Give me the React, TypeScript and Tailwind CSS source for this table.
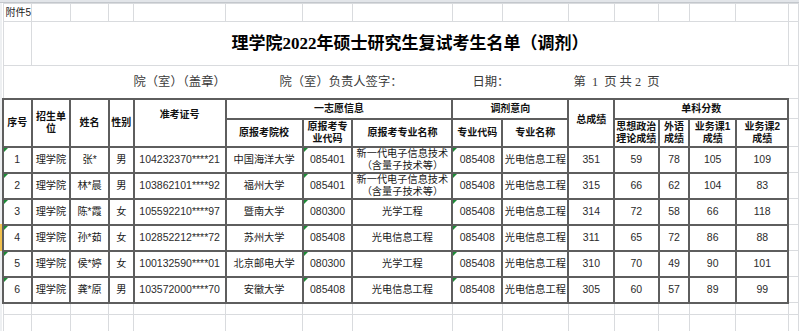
import type { ReactNode } from 'react';

interface Student {
  no: string;
  unit: string;
  name: string;
  sex: string;
  exam: string;
  school: string;
  code: string;
  major: ReactNode;
  tCode: string;
  tMajor: string;
  total: string;
  pol: string;
  lang: string;
  b1: string;
  b2: string;
}

const NEW_GEN = (
  <>
    新一代电子信息技术
    <br />
    （含量子技术等）
  </>
);

const STUDENTS: Student[] = [
  { no: '1', unit: '理学院', name: '张*', sex: '男', exam: '104232370****21', school: '中国海洋大学', code: '085401', major: NEW_GEN, tCode: '085408', tMajor: '光电信息工程', total: '351', pol: '59', lang: '78', b1: '105', b2: '109' },
  { no: '2', unit: '理学院', name: '林*晨', sex: '男', exam: '103862101****92', school: '福州大学', code: '085401', major: NEW_GEN, tCode: '085408', tMajor: '光电信息工程', total: '315', pol: '66', lang: '62', b1: '104', b2: '83' },
  { no: '3', unit: '理学院', name: '陈*霞', sex: '女', exam: '105592210****97', school: '暨南大学', code: '080300', major: '光学工程', tCode: '085408', tMajor: '光电信息工程', total: '314', pol: '72', lang: '58', b1: '66', b2: '118' },
  { no: '4', unit: '理学院', name: '孙*茹', sex: '女', exam: '102852212****72', school: '苏州大学', code: '085408', major: '光电信息工程', tCode: '085408', tMajor: '光电信息工程', total: '311', pol: '65', lang: '72', b1: '86', b2: '88' },
  { no: '5', unit: '理学院', name: '侯*婷', sex: '女', exam: '100132590****01', school: '北京邮电大学', code: '080300', major: '光学工程', tCode: '085408', tMajor: '光电信息工程', total: '310', pol: '70', lang: '49', b1: '90', b2: '101' },
  { no: '6', unit: '理学院', name: '龚*原', sex: '男', exam: '103572000****70', school: '安徽大学', code: '085408', major: '光电信息工程', tCode: '085408', tMajor: '光电信息工程', total: '305', pol: '60', lang: '57', b1: '89', b2: '99' },
];

// column widths in px, last one is the sheet filler to the window edge
const COLS = [26, 39, 39, 25, 92, 78, 50, 101, 50, 67, 46, 45, 31, 47, 53, 10];

const grid = 'border border-[#d9dbde] p-0';
const cell = 'border-2 border-[#5e5e5e] p-0 text-center align-middle';
const head = `${cell} font-bold text-[10px] leading-[12px] text-[#111]`;
const num = 'text-[10.5px] text-[#2b2b2b]';
const cjk = 'text-[10.2px] text-[#1a1a1a]';

function Mark() {
  return <span className="absolute left-0 top-0 border-t-[4px] border-r-[4px] border-t-[#1d8a36] border-r-transparent" />;
}

function EmptyRow({ h }: { h: string }) {
  return (
    <tr className={h}>
      {COLS.map((_, i) => (
        <td key={i} className={grid} />
      ))}
    </tr>
  );
}

export default function App() {
  return (
    <div className="w-[799px] h-[331px] overflow-hidden bg-white font-['Liberation_Sans','Noto_Sans_CJK_SC',sans-serif]">
      <div className="h-[3px] bg-[#e2e5e9] border-b border-[#c3c7cc]" />
      <div className="flex">
        <div className="flex w-[2px] shrink-0 flex-col bg-[#eef0f2]">
          <div className="h-[221px]" />
          <div className="h-[27px] bg-[#f2c14e]" />
        </div>
        <table className="table-fixed border-collapse">
          <colgroup>
            {COLS.map((w, i) => (
              <col key={i} style={{ width: w }} />
            ))}
          </colgroup>
          <tbody>
            <tr className="h-[18px]">
              <td className={`${grid} pl-[2px] text-[10px] text-[#222] whitespace-nowrap`}>附件5</td>
              {COLS.slice(1).map((_, i) => (
                <td key={i} className={grid} />
              ))}
            </tr>
            <tr className="h-[44px]">
              <td className={grid} />
              <td colSpan={14} className={`${grid} text-center font-['Liberation_Serif','Noto_Sans_CJK_SC',serif] text-[17px] font-bold text-black`}>
                理学院2022年硕士研究生复试考生名单（调剂）
              </td>
              <td className={grid} />
            </tr>
            <tr className="h-[33px]">
              <td colSpan={16} className={grid}>
                <div className="flex items-center pl-[130px] font-['Liberation_Serif','Noto_Sans_CJK_SC',serif] text-[12.3px] text-[#3a3a3a]">
                  <span className="w-[146px]">院（室）（盖章）</span>
                  <span className="w-[193px]">院（室）负责人签字：</span>
                  <span className="w-[101px]">日期：</span>
                  <span className="whitespace-pre">第  1  页 共 2  页</span>
                </div>
              </td>
            </tr>
            <tr className="h-[20px]">
              <td rowSpan={2} className={head}>序号</td>
              <td rowSpan={2} className={`${head} px-[3px]`}>招生单<br />位</td>
              <td rowSpan={2} className={head}>姓名</td>
              <td rowSpan={2} className={head}>性别</td>
              <td rowSpan={2} className={`${head} pb-[16px]`}>准考证号</td>
              <td colSpan={3} className={head}>一志愿信息</td>
              <td colSpan={2} className={head}>调剂意向</td>
              <td rowSpan={2} className={`${head} pb-[6px]`}>总成绩</td>
              <td colSpan={4} className={head}>单科分数</td>
              <td className={grid} />
            </tr>
            <tr className="h-[28px]">
              <td className={head}>原报考院校</td>
              <td className={head}>原报考专<br />业代码</td>
              <td className={head}>原报考专业名称</td>
              <td className={head}>专业代码</td>
              <td className={head}>专业名称</td>
              <td className={head}>思想政治<br />理论成绩</td>
              <td className={head}>外语<br />成绩</td>
              <td className={head}>业务课1<br />成绩</td>
              <td className={head}>业务课2<br />成绩</td>
              <td className={grid} />
            </tr>
            {STUDENTS.map((s) => (
              <tr key={s.no} className="h-[26px]">
                <td className={`${cell} ${num} relative`}><Mark />{s.no}</td>
                <td className={`${cell} ${cjk}`}>{s.unit}</td>
                <td className={`${cell} ${cjk}`}>{s.name}</td>
                <td className={`${cell} ${cjk}`}>{s.sex}</td>
                <td className={`${cell} ${num} whitespace-nowrap`}>{s.exam}</td>
                <td className={`${cell} ${cjk}`}>{s.school}</td>
                <td className={`${cell} ${num} relative`}><Mark />{s.code}</td>
                <td className={`${cell} ${cjk} leading-[12px]`}>{s.major}</td>
                <td className={`${cell} ${num} relative`}><Mark />{s.tCode}</td>
                <td className={`${cell} ${cjk}`}>{s.tMajor}</td>
                <td className={`${cell} ${num}`}>{s.total}</td>
                <td className={`${cell} ${num}`}>{s.pol}</td>
                <td className={`${cell} ${num}`}>{s.lang}</td>
                <td className={`${cell} ${num}`}>{s.b1}</td>
                <td className={`${cell} ${num}`}>{s.b2}</td>
                <td className={grid} />
              </tr>
            ))}
            <EmptyRow h="h-[12px]" />
            <EmptyRow h="h-[18px]" />
          </tbody>
        </table>
      </div>
    </div>
  );
}
